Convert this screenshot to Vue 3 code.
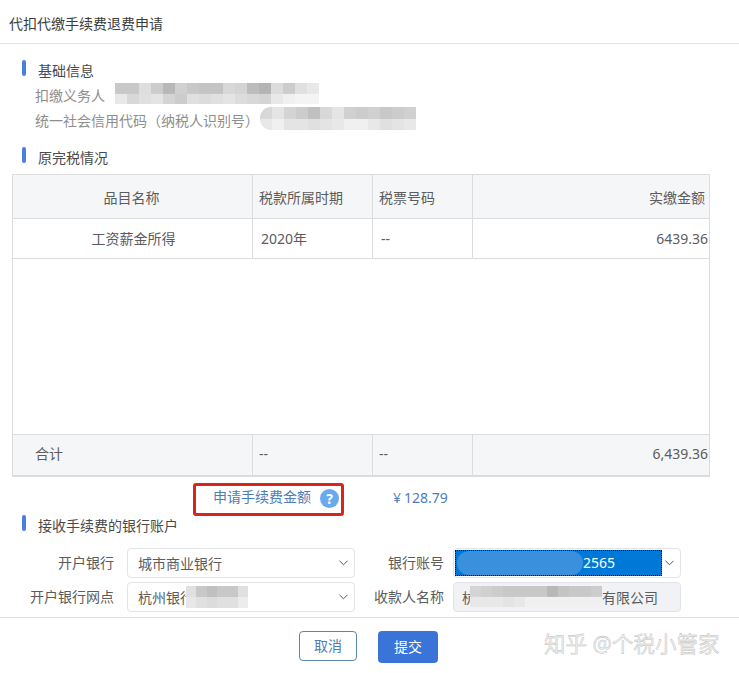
<template>
  <div class="page">
    <header class="dialog-head">代扣代缴手续费退费申请</header>

    <main class="dialog-body">
      <h3 class="section-title first">基础信息</h3>
      <div class="info-row row-a">
        <span>扣缴义务人</span>
        <i class="mask mask-payer" :style="mosaic(masks.payer)"></i>
      </div>
      <div class="info-row row-b">
        <span>统一社会信用代码（纳税人识别号）</span>
        <i class="mask mask-code" :style="mosaic(masks.code)"></i>
      </div>

      <h3 class="section-title second">原完税情况</h3>
      <table class="tax-table">
        <colgroup>
          <col class="col-name" />
          <col class="col-period" />
          <col class="col-ticket" />
          <col />
        </colgroup>
        <thead>
          <tr class="head-row">
            <th class="center head-name">品目名称</th>
            <th>税款所属时期</th>
            <th>税票号码</th>
            <th class="right">实缴金额</th>
          </tr>
        </thead>
        <tbody>
          <tr class="data-row">
            <td class="center data-name">工资薪金所得</td>
            <td>2020年</td>
            <td>--</td>
            <td class="right tight">6439.36</td>
          </tr>
          <tr class="empty-row"><td colspan="4"></td></tr>
        </tbody>
        <tfoot>
          <tr class="total-row">
            <td class="total-label">合计</td>
            <td>--</td>
            <td>--</td>
            <td class="right tight">6,439.36</td>
          </tr>
        </tfoot>
      </table>

      <div class="fee-row">
        <div class="fee-box">
          <span class="fee-label">申请手续费金额</span>
          <span class="help">?</span>
        </div>
        <span class="fee-value"><span class="yen">¥</span>128.79</span>
      </div>

      <h3 class="section-title third">接收手续费的银行账户</h3>

      <div class="form-grid">
        <label>开户银行</label>
        <div class="field">
          <span>城市商业银行</span>
          <svg class="chevron" viewBox="0 0 10 6"><polyline points="0.5,0.5 5,5 9.5,0.5" /></svg>
        </div>
        <label>银行账号</label>
        <div class="field account right-col">
          <span class="selected">
            <i class="mask mask-account"></i>
            <span>2565</span>
          </span>
          <svg class="chevron" viewBox="0 0 10 6"><polyline points="0.5,0.5 5,5 9.5,0.5" /></svg>
        </div>
        <label>开户银行网点</label>
        <div class="field">
          <span class="masked">杭州银行<i class="mask mask-branch" :style="mosaic(masks.branch)"></i></span>
          <svg class="chevron" viewBox="0 0 10 6"><polyline points="0.5,0.5 5,5 9.5,0.5" /></svg>
        </div>
        <label>收款人名称</label>
        <div class="field disabled right-col">
          <span class="masked">杭<i class="mask mask-payee" :style="mosaic(masks.payee)"></i>有限公司</span>
        </div>
      </div>
    </main>

    <footer class="dialog-foot">
      <button class="btn btn-plain">取消</button>
      <button class="btn btn-primary">提交</button>
      <span class="watermark">知乎 @个税小管家</span>
    </footer>
  </div>
</template>

<script setup>
// grey shades of the blurred-out areas, two rows of cells
const masks = {
  payer: [
    ['c8', 'c8', 'de', 'cc', 'b8', 'd0', 'c8', 'c4', 'c4', 'd8', 'd4', 'bc', 'b4', 'dc', 'cc', 'e0', 'e8'],
    ['e8', 'd8', 'e0', 'e4', 'd4', 'cc', 'e0', 'dc', 'e0', 'e4', 'dc', 'd8', 'd4', 'e8', 'f0', 'f4', 'f4']
  ],
  code: [
    ['d8', 'e4', 'd4', 'cc', 'c0', 'd8', 'e4', 'd0', 'cc', 'd0', 'c8', 'cc', 'd0'],
    ['e8', 'f0', 'e4', 'e4', 'e0', 'e4', 'e8', 'f0', 'f0', 'e8', 'e0', 'e4', 'e8']
  ],
  branch: [
    ['e0', 'c8', 'c0', 'c8', 'c8', 'e0'],
    ['e8', 'e0', 'dc', 'e0', 'e0', 'ec']
  ],
  payee: [
    ['d4', 'd0', 'cc', 'c8', 'c8', 'c8', 'c8', 'b8', 'c4', 'c8', 'c8', 'cc'],
    ['e8', 'e8', 'e8', 'e4', 'e8', 'f0', 'f0', 'f0', 'f0', 'f0', 'f0', 'f0']
  ]
}

const mosaic = (rows) => {
  const layer = (row) => {
    const step = 100 / row.length
    const stops = row.map((c, i) => `#${c}${c}${c} ${i * step}% ${(i + 1) * step}%`)
    return `linear-gradient(90deg, ${stops.join(', ')})`
  }
  return {
    backgroundImage: `${layer(rows[0])}, ${layer(rows[1])}`,
    backgroundSize: '100% 52%, 100% 100%',
    backgroundRepeat: 'no-repeat'
  }
}
</script>

<style>
html,
body {
  margin: 0;
  background: #fff;
}
</style>

<style scoped>
.page {
  width: 739px;
  height: 673px;
  display: flex;
  flex-direction: column;
  overflow: hidden;
  font-family: "Noto Sans", "Noto Sans CJK SC", sans-serif;
  font-size: 14px;
  color: #5c5c5c;
}

.dialog-head {
  height: 43px;
  line-height: 47px;
  padding-left: 9px;
  border-bottom: 1px solid #e3e3e3;
  color: #3c3c3c;
  flex-shrink: 0;
}

.dialog-body {
  flex: 1;
  min-height: 0;
  padding-left: 12px;
  padding-right: 29px;
}

.section-title {
  margin: 0;
  padding-left: 26px;
  height: 20px;
  line-height: 20px;
  font-size: 14px;
  font-weight: 400;
  color: #4a4a4a;
  position: relative;
}

.section-title::before {
  content: "";
  position: absolute;
  left: 10px;
  top: -1px;
  width: 4px;
  height: 16px;
  border-radius: 2px;
  background: #4a80e0;
}

.section-title.first,
.section-title.second {
  margin-top: 17px;
}

.section-title.third {
  margin-top: 0;
}

.info-row {
  display: flex;
  align-items: center;
  height: 25px;
  padding-left: 23px;
  color: #8e8e8e;
  white-space: nowrap;
}

.row-a span {
  width: 80px;
  padding-top: 3px;
}

.row-b span {
  width: 225px;
  padding-top: 3px;
}

.mask {
  display: inline-block;
  flex-shrink: 0;
  filter: blur(0.6px);
}

.mask-payer {
  width: 204px;
  height: 21px;
}

.mask-code {
  width: 156px;
  height: 23px;
  border-radius: 11px 0 0 11px;
}

.tax-table {
  width: 698px;
  margin-top: 6px;
  border-collapse: collapse;
  table-layout: fixed;
}

.col-name {
  width: 240px;
}

.col-period {
  width: 120px;
}

.col-ticket {
  width: 100px;
}

.tax-table th,
.tax-table td {
  border: 1px solid #dcdcdf;
  font-weight: 400;
  text-align: left;
}

.tax-table th {
  background: #f5f6f8;
  padding: 0 0 0 6px;
}

.tax-table td {
  padding: 0 0 1px 8px;
}

.tax-table .center {
  text-align: center;
  padding-left: 0;
}

.tax-table .head-name {
  padding-right: 2px;
}

.tax-table .data-name {
  padding-left: 2px;
}

.tax-table .right {
  text-align: right;
  padding-right: 4px;
}

.tax-table .tight {
  padding-right: 1px;
}

.head-row {
  height: 44px;
}

.data-row {
  height: 40px;
}

.empty-row {
  height: 176px;
}

.empty-row td {
  border-top: none;
}

.total-row {
  height: 41px;
}

.total-row td {
  background: #f5f6f8;
  border-bottom-width: 2px;
  padding: 0 0 3px 6px;
}

.tax-table .total-label {
  padding-left: 22px;
}

.fee-row {
  display: flex;
  align-items: center;
  height: 33px;
  margin-top: 6px;
  padding-left: 181px;
  color: #4b7db8;
}

.fee-box {
  box-sizing: border-box;
  display: flex;
  align-items: center;
  width: 151px;
  height: 33px;
  padding-left: 18px;
  border: 3px solid #d9261c;
  border-radius: 3px;
}

.fee-label {
  padding-bottom: 6px;
  margin-left: -1px;
}

.help {
  width: 19px;
  height: 19px;
  margin: 0 0 2px 9px;
  border-radius: 50%;
  background: #69a9ee;
  color: #fff;
  font-size: 14px;
  font-weight: 700;
  line-height: 19px;
  text-align: center;
}

.fee-value {
  margin-left: 49px;
  padding-bottom: 4px;
}

.yen {
  margin-right: 3px;
}

.form-grid {
  display: grid;
  grid-template-columns: 102px 241px 89px 237px;
  grid-auto-rows: 30px;
  row-gap: 4px;
  margin-top: 12px;
  align-items: center;
}

.form-grid label {
  text-align: right;
  white-space: nowrap;
  padding-bottom: 1px;
}

.form-grid .field {
  margin-left: 13px;
}

.form-grid .field.right-col {
  margin-left: 9px;
}

.field {
  box-sizing: border-box;
  height: 30px;
  width: 228px;
  display: flex;
  align-items: center;
  justify-content: space-between;
  padding: 0 6px 0 10px;
  border: 1px solid #e2e4e8;
  border-radius: 4px;
  background: #fff;
  white-space: nowrap;
}

.field.disabled {
  background: #f1f2f5;
  padding-left: 8px;
}

.field.account {
  padding-left: 1px;
}

.masked {
  display: flex;
  align-items: center;
}

.selected {
  box-sizing: border-box;
  display: flex;
  align-items: center;
  width: 207px;
  height: 26px;
  background: #0078d7;
  outline: 1px dotted #111;
  outline-offset: -1px;
  color: #fff;
}

.mask-account {
  width: 126px;
  height: 24px;
  margin-left: 2px;
  border-radius: 12px;
  background: #3a90dc;
  filter: none;
}

.mask-branch {
  width: 62px;
  height: 22px;
  margin-left: -8px;
}

.mask-payee {
  width: 132px;
  height: 21px;
  margin-left: -6px;
}

.chevron {
  width: 9px;
  height: 6px;
  flex-shrink: 0;
}

.chevron polyline {
  fill: none;
  stroke: #444;
  stroke-width: 1;
}

.dialog-foot {
  position: relative;
  box-sizing: border-box;
  height: 56px;
  flex-shrink: 0;
  display: flex;
  align-items: flex-start;
  gap: 21px;
  padding: 13px 0 0 299px;
  border-top: 1px solid #dcdcdc;
}

.btn {
  width: 58px;
  height: 30px;
  border-radius: 4px;
  font-family: inherit;
  font-size: 14px;
  padding: 0 0 2px;
}

.btn-plain {
  background: #fff;
  border: 1px solid #5c88a8;
  color: #4b7db8;
}

.btn-primary {
  width: 60px;
  height: 32px;
  background: #3b74d8;
  border: none;
  color: #fff;
}

.watermark {
  position: absolute;
  left: 544px;
  top: 11px;
  font-size: 21.5px;
  line-height: 30px;
  color: #efefef;
  -webkit-text-stroke: 0.4px #bcbcbc;
  white-space: nowrap;
}
</style>
